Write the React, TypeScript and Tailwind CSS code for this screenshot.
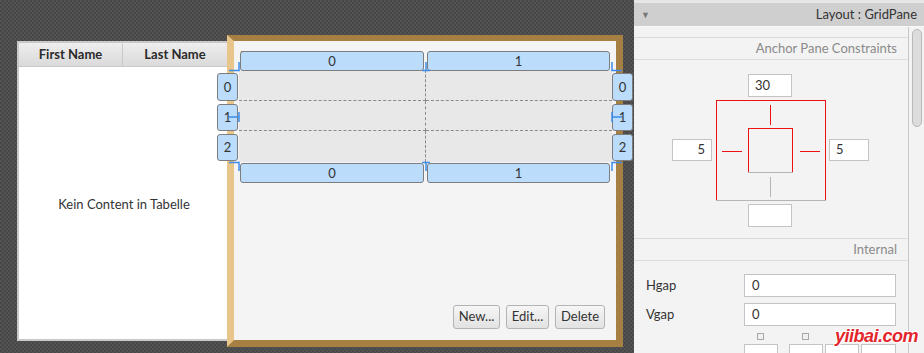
import type { ReactNode } from "react";

// Scene Builder style capture: designer canvas on the left, inspector on the right.
const FONT = "font-['Lato','Open_Sans',sans-serif]";

function Handle({ children, className }: { children: ReactNode; className: string }) {
  return (
    <div
      className={`absolute flex items-center justify-center rounded-[3px] border border-[#7d7d7d] bg-[#bbdcfb] text-[13px] leading-none text-[#333] ${className}`}
    >
      {children}
    </div>
  );
}

function Btn({ label, w }: { label: string; w: string }) {
  return (
    <button
      className={`flex h-[24px] items-center justify-center rounded-[3px] border border-[#b4b4b4] bg-gradient-to-b from-[#f6f6f6] to-[#e2e2e2] text-[13px] text-[#333] ${w}`}
    >
      {label}
    </button>
  );
}

function Field({ value, align = "left", className }: { value?: string; align?: "left" | "right"; className: string }) {
  return (
    <div
      className={`absolute flex items-center border border-[#c4c4c4] bg-white px-[6px] text-[13px] text-[#333] ${
        align === "right" ? "justify-end" : "justify-start"
      } ${className}`}
    >
      {value}
    </div>
  );
}

function Canvas() {
  return (
    <div className="relative h-full w-[634px] shrink-0 overflow-hidden bg-[#4c4c4c] bg-[repeating-conic-gradient(#474747_0_25%,#535353_0_50%)] bg-[length:4px_4px]">
      {/* TableView */}
      <div className="absolute left-[17px] top-[41px] flex h-[300px] w-[214px] flex-col border-2 border-[#c9c9c9] bg-white">
        <div className="flex h-[24px] shrink-0 border-b border-[#c9c9c9]">
          <div className="flex w-[104px] items-center justify-center border-r border-[#c9c9c9] bg-gradient-to-b from-[#eeeeee] to-[#dadada] text-[13px] font-bold text-[#2b2b2b]">
            First Name
          </div>
          <div className="flex w-[104px] items-center justify-center bg-gradient-to-b from-[#eeeeee] to-[#dadada] text-[13px] font-bold text-[#2b2b2b]">
            Last Name
          </div>
        </div>
        <div className="flex flex-1 items-center justify-center pt-[4px] text-[13px] text-[#333]">Kein Content in Tabelle</div>
      </div>

      {/* selected AnchorPane */}
      <div className="absolute left-[227px] top-[35px] flex h-[312px] w-[396px] flex-col border-b-[7px] border-l-[7px] border-r-[7px] border-t-[6px] border-b-[#a67f42] border-l-[#e8c58a] border-r-[#a67f42] border-t-[#a67f42] bg-[#f4f4f4]">
        <div className="pl-[6px] pt-[4px] text-[14px] text-[#4a3526]">Person Details</div>
        <div className="flex-1" />
        <div className="flex justify-end gap-[6px] pb-[11px] pr-[11px]">
          <Btn label="New..." w="w-[47px]" />
          <Btn label="Edit..." w="w-[43px]" />
          <Btn label="Delete" w="w-[50px]" />
        </div>
      </div>

      {/* GridPane */}
      <div className="absolute left-[239px] top-[70px] grid h-[92px] w-[373px] grid-cols-2 grid-rows-3 bg-[#e8e8e8]">
        <div className="border-b border-r border-dashed border-[#8a8a8a]" />
        <div className="border-b border-dashed border-[#8a8a8a]" />
        <div className="border-b border-r border-dashed border-[#8a8a8a]" />
        <div className="border-b border-dashed border-[#8a8a8a]" />
        <div className="border-r border-dashed border-[#8a8a8a]" />
        <div />
      </div>

      <Handle className="left-[240px] top-[51px] h-[20px] w-[184px]">0</Handle>
      <Handle className="left-[427px] top-[51px] h-[20px] w-[183px]">1</Handle>
      <Handle className="left-[240px] top-[163px] h-[20px] w-[184px]">0</Handle>
      <Handle className="left-[427px] top-[163px] h-[20px] w-[183px]">1</Handle>

      <Handle className="left-[217px] top-[73px] h-[28px] w-[21px]">0</Handle>
      <Handle className="left-[217px] top-[104px] h-[27px] w-[21px]">1</Handle>
      <Handle className="left-[217px] top-[134px] h-[27px] w-[21px]">2</Handle>
      <Handle className="left-[612px] top-[73px] h-[28px] w-[21px]">0</Handle>
      <Handle className="left-[612px] top-[104px] h-[27px] w-[21px]">1</Handle>
      <Handle className="left-[612px] top-[134px] h-[27px] w-[21px]">2</Handle>

      {/* anchor ticks */}
      <svg className="pointer-events-none absolute left-0 top-0" width="634" height="353">
        <g stroke="#3b8ce8" strokeWidth="1.5" fill="none">
          <path d="M239 62V70.5H229" />
          <path d="M612 62V70.5H622" />
          <path d="M426 62V70.5M422 70.5H430" />
          <path d="M229 117H239M239 112V122" />
          <path d="M622 117H612M612 112V122" />
          <path d="M239 171V162.5H229" />
          <path d="M612 171V162.5H622" />
          <path d="M426 171V162.5M422 162.5H430" />
        </g>
      </svg>
    </div>
  );
}

function SectionTitle({ title }: { title: string }) {
  return (
    <div className="flex h-[23px] shrink-0 items-center justify-end border-y border-[#dcdcdc] pr-[11px] text-[13px] text-[#8a8a8a]">
      {title}
    </div>
  );
}

function AnchorDiagram() {
  return (
    <div className="relative h-[178px] shrink-0">
      {/* outer box: red on anchored sides, grey on the free bottom */}
      <div className="absolute left-[82px] top-[40px] h-px w-[110px] bg-[#ee1111]" />
      <div className="absolute left-[82px] top-[40px] h-[101px] w-px bg-[#ee1111]" />
      <div className="absolute left-[191px] top-[40px] h-[101px] w-px bg-[#ee1111]" />
      <div className="absolute left-[82px] top-[140px] h-px w-[110px] bg-[#b5b5b5]" />
      {/* inner box */}
      <div className="absolute left-[114px] top-[68px] h-px w-[45px] bg-[#ee1111]" />
      <div className="absolute left-[114px] top-[68px] h-[45px] w-px bg-[#ee1111]" />
      <div className="absolute left-[158px] top-[68px] h-[45px] w-px bg-[#ee1111]" />
      <div className="absolute left-[114px] top-[112px] h-px w-[45px] bg-[#b5b5b5]" />
      {/* connectors */}
      <div className="absolute left-[136px] top-[45px] h-[20px] w-px bg-[#ee1111]" />
      <div className="absolute left-[88px] top-[91px] h-px w-[20px] bg-[#ee1111]" />
      <div className="absolute left-[166px] top-[91px] h-px w-[20px] bg-[#ee1111]" />
      <div className="absolute left-[136px] top-[117px] h-[20px] w-px bg-[#b5b5b5]" />
      <Field className="left-[114px] top-[14px] h-[23px] w-[44px] justify-center" value="30" />
      <Field className="left-[38px] top-[79px] h-[22px] w-[40px]" value="5" align="right" />
      <Field className="left-[195px] top-[79px] h-[22px] w-[40px]" value="5" />
      <Field className="left-[114px] top-[144px] h-[23px] w-[44px]" />
    </div>
  );
}

function Inspector() {
  return (
    <div className="flex min-w-0 flex-1 flex-col bg-[#f3f3f3]">
      <div className="flex h-[27px] shrink-0 items-center justify-between border-b border-[#f8f8f8] border-t-[3px] border-t-[#e6e6e6] bg-[#cfcfcf] pl-[7px] pr-[7px] text-[13px] text-[#333]">
        <span className="text-[9px] text-[#777]">▼</span>
        <span>Layout : GridPane</span>
      </div>
      <div className="flex flex-1">
        <div className="relative flex w-[274px] flex-col pt-[10px]">
          <SectionTitle title="Anchor Pane Constraints" />
          <AnchorDiagram />
          <SectionTitle title="Internal" />
          <div className="flex flex-col gap-[6px] pl-[12px] pt-[13px]">
            <div className="flex items-center">
              <span className="w-[98px] text-[13px] text-[#333]">Hgap</span>
              <div className="flex h-[23px] w-[152px] items-center border border-[#c4c4c4] bg-white px-[7px] text-[13px] text-[#333]">0</div>
            </div>
            <div className="flex items-center">
              <span className="w-[98px] text-[13px] text-[#333]">Vgap</span>
              <div className="flex h-[23px] w-[152px] items-center border border-[#c4c4c4] bg-white px-[7px] text-[13px] text-[#333]">0</div>
            </div>
            <div className="ml-[98px] flex gap-[38px] pl-[13px] pt-[1px]">
              <div className="h-[7px] w-[7px] border border-[#a8a8a8] bg-[#f0f0f0]" />
              <div className="h-[7px] w-[7px] border border-[#a8a8a8] bg-[#f0f0f0]" />
            </div>
            <div className="-mt-[2px] ml-[98px] flex gap-[2px]">
              <div className="h-[12px] w-[34px] border border-[#c4c4c4] bg-white" />
              <div className="ml-[9px] h-[12px] w-[34px] border border-[#c4c4c4] bg-white" />
              <div className="h-[12px] w-[34px] border border-[#c4c4c4] bg-white" />
              <div className="h-[12px] w-[35px] border border-[#c4c4c4] bg-white" />
            </div>
          </div>
          <div className="absolute left-[201px] top-[300px] font-['Liberation_Sans',sans-serif] text-[18px] font-bold italic leading-none tracking-[-0.5px] text-[#e3262c] [text-shadow:1px_1px_0_#fff,-1px_-1px_0_#fff,1px_-1px_0_#fff,-1px_1px_0_#fff]">
            yiibai.com
          </div>
        </div>
        <div className="flex w-[16px] justify-center border-l border-[#c8c8c8] pt-[2px]">
          <div className="h-[98px] w-[10px] rounded-full border border-[#b9b9b9] bg-[#dcdcdc]" />
        </div>
      </div>
    </div>
  );
}

export default function App() {
  return (
    <div className={`flex h-[353px] w-[924px] overflow-hidden ${FONT}`}>
      <Canvas />
      <Inspector />
    </div>
  );
}
